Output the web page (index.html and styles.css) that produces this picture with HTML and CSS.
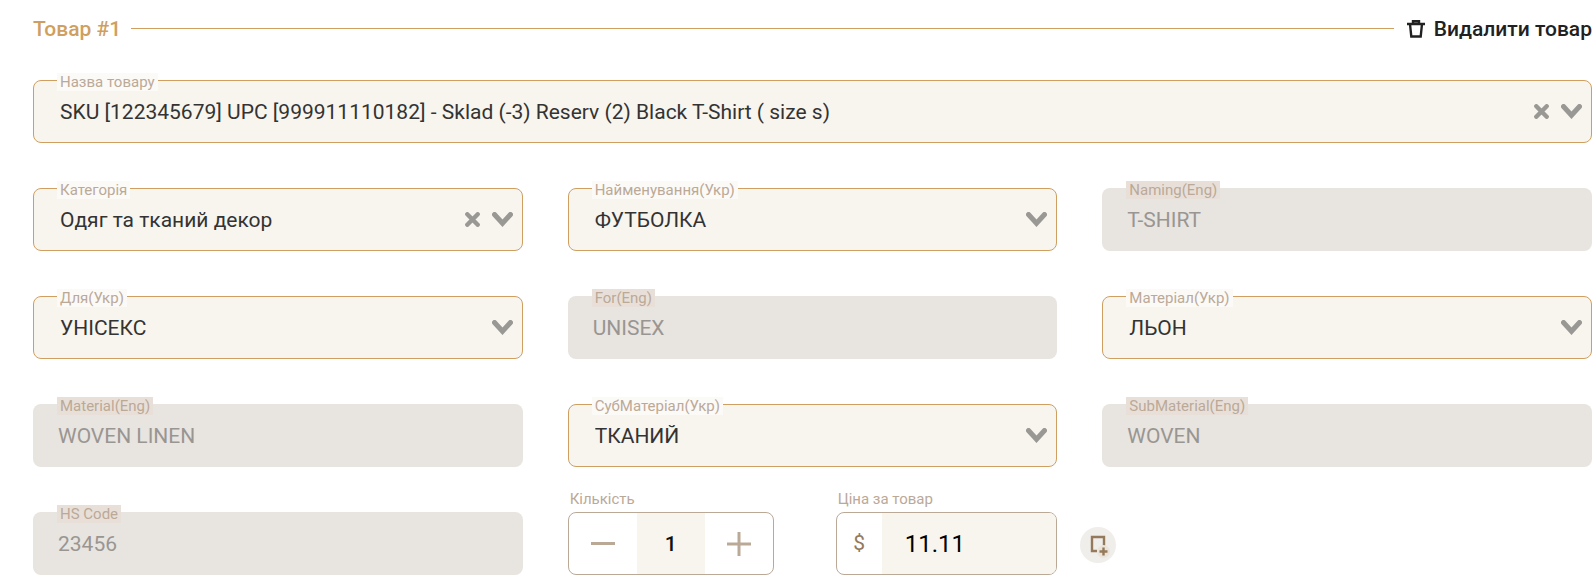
FILE: index.html
```
<!DOCTYPE html>
<html lang="uk">
<head>
    <meta charset="UTF-8">
    <meta name="viewport" content="width=device-width, initial-scale=1.0">
    <title>Товар #1</title>
    <link rel="stylesheet" href="styles.css">
</head>
<body>
    <!-- Shared icons -->
    <svg class="sprite" aria-hidden="true">
        <symbol id="icon-chevron" viewBox="0 0 21 15">
            <path d="M2.5 2.5 10.5 11.3 18.5 2.5" fill="none" stroke="currentColor" stroke-width="5" stroke-linecap="round"/>
        </symbol>
        <symbol id="icon-clear" viewBox="0 0 15 15">
            <path d="M2.3 2.3 12.7 12.7M12.7 2.3 2.3 12.7" fill="none" stroke="currentColor" stroke-width="4.4" stroke-linecap="round"/>
        </symbol>
    </svg>

    <form class="product">
        <div class="product-header">
            <h2 class="product-title">Товар #1</h2>
            <span class="product-line"></span>
            <button type="button" class="delete-button">
                <svg width="18" height="18" viewBox="0 0 18 18" fill="none" stroke="currentColor" stroke-width="2.4">
                    <path d="M0 4H18M6 4V1.2H12V4M3 4 4.3 16.5H13.7L15 4"/>
                </svg>
                Видалити товар
            </button>
        </div>

        <div class="field">
            <label class="field-label" for="product">Назва товару</label>
            <select class="field-control" id="product">
                <option>SKU [122345679] UPC [999911110182] - Sklad (-3) Reserv (2) Black T-Shirt ( size s)</option>
            </select>
            <div class="field-icons">
                <button type="button" class="clear-button" aria-label="Очистити"><svg width="15" height="15"><use href="#icon-clear"/></svg></button>
                <svg width="21" height="15"><use href="#icon-chevron"/></svg>
            </div>
        </div>

        <div class="fields-grid">
            <div class="field">
                <label class="field-label" for="category">Категорія</label>
                <select class="field-control" id="category"><option>Одяг та тканий декор</option></select>
                <div class="field-icons">
                    <button type="button" class="clear-button" aria-label="Очистити"><svg width="15" height="15"><use href="#icon-clear"/></svg></button>
                    <svg width="21" height="15"><use href="#icon-chevron"/></svg>
                </div>
            </div>
            <div class="field">
                <label class="field-label" for="naming-ua">Найменування(Укр)</label>
                <select class="field-control" id="naming-ua"><option>ФУТБОЛКА</option></select>
                <div class="field-icons"><svg width="21" height="15"><use href="#icon-chevron"/></svg></div>
            </div>
            <div class="field disabled">
                <label class="field-label" for="naming-en">Naming(Eng)</label>
                <input class="field-control" id="naming-en" type="text" value="T-SHIRT" disabled>
            </div>

            <div class="field">
                <label class="field-label" for="for-ua">Для(Укр)</label>
                <select class="field-control" id="for-ua"><option>УНІСЕКС</option></select>
                <div class="field-icons"><svg width="21" height="15"><use href="#icon-chevron"/></svg></div>
            </div>
            <div class="field disabled">
                <label class="field-label" for="for-en">For(Eng)</label>
                <input class="field-control" id="for-en" type="text" value="UNISEX" disabled>
            </div>
            <div class="field">
                <label class="field-label" for="material-ua">Матеріал(Укр)</label>
                <select class="field-control" id="material-ua"><option>ЛЬОН</option></select>
                <div class="field-icons"><svg width="21" height="15"><use href="#icon-chevron"/></svg></div>
            </div>

            <div class="field disabled">
                <label class="field-label" for="material-en">Material(Eng)</label>
                <input class="field-control" id="material-en" type="text" value="WOVEN LINEN" disabled>
            </div>
            <div class="field">
                <label class="field-label" for="submaterial-ua">СубМатеріал(Укр)</label>
                <select class="field-control" id="submaterial-ua"><option>ТКАНИЙ</option></select>
                <div class="field-icons"><svg width="21" height="15"><use href="#icon-chevron"/></svg></div>
            </div>
            <div class="field disabled">
                <label class="field-label" for="submaterial-en">SubMaterial(Eng)</label>
                <input class="field-control" id="submaterial-en" type="text" value="WOVEN" disabled>
            </div>
        </div>

        <div class="fields-grid last-row">
            <div class="field disabled">
                <label class="field-label" for="hs-code">HS Code</label>
                <input class="field-control" id="hs-code" type="text" value="23456" disabled>
            </div>
            <div class="amounts">
                <div class="quantity">
                    <label class="top-label" for="quantity">Кількість</label>
                    <div class="input-group">
                        <button type="button" class="step-button" id="minus" aria-label="Менше">
                            <svg width="24" height="24" viewBox="0 0 24 24"><path d="M0 11.5H24" stroke="currentColor" stroke-width="3"/></svg>
                        </button>
                        <input class="quantity-input" id="quantity" type="text" value="1">
                        <button type="button" class="step-button" id="plus" aria-label="Більше">
                            <svg width="24" height="24" viewBox="0 0 24 24"><path d="M0 12H24M12 0V24" stroke="currentColor" stroke-width="3"/></svg>
                        </button>
                    </div>
                </div>
                <div class="price">
                    <label class="top-label" for="price">Ціна за товар</label>
                    <div class="input-group">
                        <span class="currency">$</span>
                        <input class="price-input" id="price" type="text" value="11.11">
                    </div>
                </div>
            </div>
            <button type="button" class="add-button" aria-label="Додати товар">
                <svg width="36" height="36" viewBox="0 0 36 36" fill="none">
                    <path d="M17 24H12V10H24V19" stroke="#94795a" stroke-width="2.4"/>
                    <circle cx="23.5" cy="24.5" r="6.5" fill="#ebe4dc"/>
                    <path d="M19.5 24.5H27.5M23.5 20.5V28.5" stroke="#94795a" stroke-width="2.4"/>
                </svg>
            </button>
        </div>
    </form>

    <script>
        // Quantity stepper
        const quantity = document.getElementById('quantity');
        document.getElementById('minus').addEventListener('click', () => {
            quantity.value = Math.max(1, Number(quantity.value) - 1);
        });
        document.getElementById('plus').addEventListener('click', () => {
            quantity.value = Number(quantity.value) + 1;
        });
    </script>
</body>
</html>
```
FILE: styles.css
```
* {
    margin: 0;
    padding: 0;
    box-sizing: border-box;
    font-family: Roboto, sans-serif;
}

:root {
    --gold: #cf9f62;
    --taupe: #bba998;
    --brown: #94795a;
    --cream: #f8f5ee;
    --gray: #e8e4e0;
    --dark: #212121;
}

body {
    background: #fff;
}

button {
    background: none;
    border: none;
    cursor: pointer;
}

svg {
    display: block;
}

.sprite {
    position: absolute;
    width: 0;
    height: 0;
}

.product {
    padding: 16px 4px 7px 33px;
}

.product-header {
    display: flex;
    align-items: center;
    height: 25px;
    margin-bottom: 39px;
}

.product-title {
    padding-top: 2px;
    font-size: 21px;
    font-weight: 500;
    line-height: 25px;
    color: var(--gold);
}

.product-line {
    flex: 1;
    height: 1px;
    margin: 0 13px 0 10px;
    background: var(--gold);
}

.delete-button {
    display: flex;
    align-items: center;
    gap: 9px;
    padding-top: 2px;
    font-size: 21px;
    font-weight: 500;
    line-height: 25px;
    color: var(--dark);
}

.delete-button svg {
    margin-bottom: 2px;
}

.field {
    position: relative;
}

.field-label {
    position: absolute;
    top: -7px;
    left: 24px;
    padding: 0 3px;
    font-size: 15px;
    line-height: 18px;
    color: var(--taupe);
    background: #fcfaf7;
}

.field-control {
    display: block;
    width: 100%;
    height: 63px;
    padding: 0 80px 0 26px;
    appearance: none;
    border: 1px solid var(--gold);
    border-radius: 8px;
    outline: none;
    background: var(--cream);
    font-size: 21px;
    color: #333;
}

.field-icons {
    position: absolute;
    top: 0;
    right: 10px;
    height: 63px;
    display: flex;
    align-items: center;
    gap: 12px;
    color: #9a9894;
    pointer-events: none;
}

.clear-button {
    color: inherit;
    pointer-events: auto;
}

.disabled .field-label {
    background: #e8e0d8;
}

.disabled .field-control {
    padding: 0 25px;
    border: none;
    background: var(--gray);
    color: #999692;
}

.fields-grid {
    display: grid;
    grid-template-columns: repeat(3, minmax(0, 1fr));
    gap: 45px;
    margin-top: 45px;
}

.last-row {
    align-items: end;
    margin-top: 23px;
}

.amounts {
    display: flex;
    gap: 62px;
}

.quantity {
    width: 206px;
}

.price {
    flex: 1;
    min-width: 0;
}

.top-label {
    display: block;
    padding-left: 2px;
    margin-bottom: 4px;
    font-size: 15px;
    line-height: 18px;
    color: var(--taupe);
}

.input-group {
    display: flex;
    height: 63px;
    border: 1px solid var(--taupe);
    border-radius: 8px;
    overflow: hidden;
}

.step-button {
    flex: 1;
    display: flex;
    align-items: center;
    justify-content: center;
    color: var(--taupe);
}

.quantity-input {
    width: 68px;
    border: none;
    outline: none;
    background: var(--cream);
    font-size: 21px;
    font-weight: 500;
    text-align: center;
    color: #111;
}

.currency {
    width: 45px;
    font-size: 21px;
    line-height: 61px;
    text-align: center;
    color: var(--brown);
}

.price-input {
    flex: 1;
    min-width: 0;
    padding-left: 23px;
    border: none;
    outline: none;
    background: var(--cream);
    font-size: 24px;
    color: #000;
}

.add-button {
    width: 36px;
    height: 36px;
    margin: 0 0 12px -22px;
    border-radius: 50%;
    background: #efeeeb;
}

@media (max-width: 900px) {
    .fields-grid {
        grid-template-columns: 1fr;
    }

    .add-button {
        margin-left: 0;
    }
}
```
